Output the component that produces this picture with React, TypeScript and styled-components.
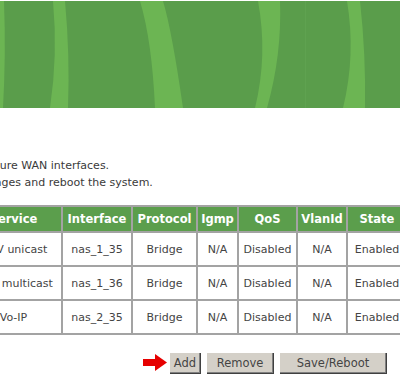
import React from 'react';
import styled, {createGlobalStyle} from 'styled-components';

const GlobalStyle = createGlobalStyle`
  html, body {
    margin: 0;
    padding: 0;
    background: #ffffff;
    overflow: hidden;
  }
  body {
    font-family: "DejaVu Sans", Verdana, sans-serif;
    color: #333333;
  }
`

const Page = styled.div`
  width: 400px;
  height: 383px;
  overflow: hidden;
  position: relative;
`

const Banner = styled.div`
  height: 107px;
  margin-top: 1px;
  background: #5a9d4b;
  svg {
    display: block;
  }
`

const Content = styled.div`
  margin-left: -220px;
  width: 900px;
`

const Intro = styled.p`
  margin: 49px 0 0;
  padding-left: 8px;
  font-size: 11px;
  line-height: 17px;
  color: #3a3a3a;
`

const Table = styled.table`
  margin: 14px 0 0 184px;
  border: 1px solid #a3a3a3;
  border-spacing: 0;
  table-layout: fixed;
  font-size: 11px;
`

const HeadCell = styled.th<{ $w: number }>`
  box-sizing: border-box;
  width: ${p => p.$w}px;
  height: 26px;
  padding: 0;
  border: 1px solid #a3a3a3;
  background: #5b9e4c;
  color: #ffffff;
  font-size: 11.5px;
  font-weight: bold;
  text-align: center;
  white-space: nowrap;
`

const Cell = styled.td`
  box-sizing: border-box;
  height: 34px;
  padding: 0;
  border: 1px solid #a3a3a3;
  color: #444444;
  text-align: center;
  white-space: nowrap;
`

const ButtonBar = styled.div`
  display: flex;
  align-items: center;
  margin: 17px 0 0 363px;
`

const Arrow = styled.svg`
  display: block;
  margin-right: 2px;
`

const Button = styled.button<{ $w: number }>`
  box-sizing: border-box;
  width: ${p => p.$w}px;
  height: 22px;
  margin-right: 5px;
  padding: 0;
  background: #d4d0c8;
  color: #444444;
  font-family: "DejaVu Sans", Verdana, sans-serif;
  font-size: 11.5px;
  border: none;
  box-shadow: inset 1px 1px 0 #ffffff, inset -1px -1px 0 #404040, inset -2px -2px 0 #808080;
`

const columns = [
    {name: 'Service', w: 97},
    {name: 'Interface', w: 70},
    {name: 'Protocol', w: 65},
    {name: 'Igmp', w: 41},
    {name: 'QoS', w: 59},
    {name: 'VlanId', w: 50},
    {name: 'State', w: 60},
];

const rows = [
    ['IPTV unicast', 'nas_1_35', 'Bridge', 'N/A', 'Disabled', 'N/A', 'Enabled'],
    ['IPTV multicast', 'nas_1_36', 'Bridge', 'N/A', 'Disabled', 'N/A', 'Enabled'],
    ['Vo-IP', 'nas_2_35', 'Bridge', 'N/A', 'Disabled', 'N/A', 'Enabled'],
];

function Stripes() {
    return (
        <svg width="400" height="107" viewBox="0 0 400 107">
            <g fill="#6cb553">
                <path d="M0 0 L4 0 Q6 54 3 107 L0 107 Z"/>
                <path d="M53 0 Q58 54 50 107 L68 107 Q70 54 65 0 Z"/>
                <path d="M140 0 Q152 40 155 107 L183 107 Q172 30 163 0 Z"/>
                <path d="M258 0 Q268 54 255 107 L267 107 Q282 54 280 0 Z"/>
                <path d="M347 0 Q356 54 343 107 L365 107 Q366 54 360 0 Z"/>
            </g>
            <rect x="305" y="0" width="1" height="107" fill="#5fa250"/>
        </svg>
    );
}

export default function App() {
    return (
        <Page>
            <GlobalStyle/>
            <Banner>
                <Stripes/>
            </Banner>
            <Content>
                <Intro>
                    Choose Add, Edit, or Remove to configure WAN interfaces.<br/>
                    Choose Save/Reboot to apply the changes and reboot the system.
                </Intro>
                <Table>
                    <thead>
                    <tr>
                        {columns.map(c => <HeadCell key={c.name} $w={c.w}>{c.name}</HeadCell>)}
                    </tr>
                    </thead>
                    <tbody>
                    {rows.map((r, i) => (
                        <tr key={i}>
                            {r.map((v, j) => <Cell key={j}>{v}</Cell>)}
                        </tr>
                    ))}
                    </tbody>
                </Table>
                <ButtonBar>
                    <Arrow width="24" height="18" viewBox="0 0 24 18">
                        <rect x="0" y="5" width="14" height="7" fill="#e60000"/>
                        <polygon points="12,0 24,8.5 12,17" fill="#e60000"/>
                    </Arrow>
                    <Button $w={32}>Add</Button>
                    <Button $w={68}>Remove</Button>
                    <Button $w={108}>Save/Reboot</Button>
                </ButtonBar>
            </Content>
        </Page>
    );
}
